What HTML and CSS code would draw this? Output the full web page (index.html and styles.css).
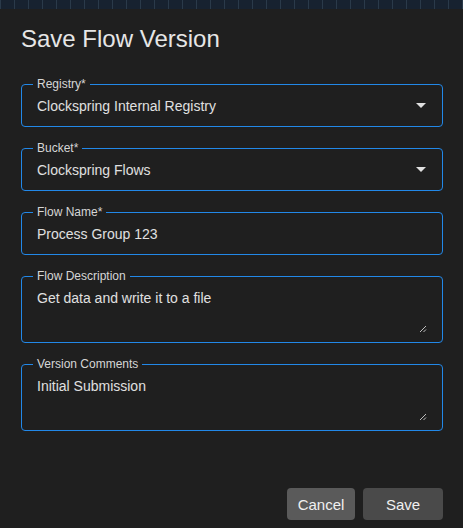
FILE: index.html
```html
<!DOCTYPE html>
<html lang="en">
<head>
<meta charset="utf-8">
<title>Save Flow Version</title>
<link rel="stylesheet" href="styles.css">
</head>
<body>
<div class="backdrop"></div>
<div class="dialog">
  <h1 class="title">Save Flow Version</h1>
  <form class="form">
    <fieldset class="field">
      <legend class="label">Registry*</legend>
      <div class="select">
        <span class="value">Clockspring Internal Registry</span>
        <svg class="caret" width="10" height="5" viewBox="0 0 10 5"><path d="M0 0h10L5 5z" fill="#e0e0e0"/></svg>
      </div>
    </fieldset>
    <fieldset class="field">
      <legend class="label">Bucket*</legend>
      <div class="select">
        <span class="value">Clockspring Flows</span>
        <svg class="caret" width="10" height="5" viewBox="0 0 10 5"><path d="M0 0h10L5 5z" fill="#e0e0e0"/></svg>
      </div>
    </fieldset>
    <fieldset class="field">
      <legend class="label">Flow Name*</legend>
      <div class="select">
        <span class="value">Process Group 123</span>
      </div>
    </fieldset>
    <fieldset class="field area">
      <legend class="label">Flow Description</legend>
      <div class="area-body">
        <span class="value">Get data and write it to a file</span>
        <svg class="grip" width="8" height="8" viewBox="0 0 8 8"><path d="M7 1L1 7M7 4.5L4.5 7" stroke="#bdbdbd" stroke-width="1"/></svg>
      </div>
    </fieldset>
    <fieldset class="field area">
      <legend class="label">Version Comments</legend>
      <div class="area-body">
        <span class="value">Initial Submission</span>
        <svg class="grip" width="8" height="8" viewBox="0 0 8 8"><path d="M7 1L1 7M7 4.5L4.5 7" stroke="#bdbdbd" stroke-width="1"/></svg>
      </div>
    </fieldset>
  </form>
  <div class="actions">
    <button class="btn cancel" type="button">Cancel</button>
    <button class="btn save" type="button">Save</button>
  </div>
</div>
</body>
</html>
```
FILE: styles.css
```css
* { box-sizing: border-box; }
html, body {
  margin: 0;
  padding: 0;
  background: #1f1f1f;
  font-family: "Liberation Sans", Arial, sans-serif;
  color: #e0e0e0;
}
.backdrop {
  height: 9px;
  background-color: #172230;
  background-image: linear-gradient(to right, #2a3a4a 1px, transparent 1px);
  background-size: 14px 9px;
  background-position: 0 0;
}
.dialog {
  padding: 0 20px 0 21px;
  height: 511px;
  display: flex;
  flex-direction: column;
}
.title {
  margin: 16px 0 0 0;
  font-size: 24px;
  line-height: 28px;
  font-weight: 400;
  color: #e6e6e6;
}
.form {
  margin-top: 24px;
  display: flex;
  flex-direction: column;
  gap: 14px;
}
.field {
  margin: 0;
  border: 1px solid #2288e8;
  border-radius: 4px;
  padding: 0 15px 0 15px;
  min-width: 0;
}
.label {
  font-size: 12px;
  line-height: 14px;
  padding: 0 4px;
  margin-left: -4px;
  color: #d6d6d6;
}
.select {
  height: 35px;
  padding-bottom: 6px;
  display: flex;
  align-items: center;
  justify-content: space-between;
}
.value {
  font-size: 14px;
  line-height: 18px;
  color: #e0e0e0;
}
.caret {
  margin-right: 1px;
  display: block;
}
.area-body {
  height: 59px;
  padding-top: 6px;
  padding-bottom: 9px;
  display: flex;
  justify-content: space-between;
}
.grip {
  align-self: flex-end;
  margin-right: 0;
  display: block;
}
.actions {
  margin-top: auto;
  display: flex;
  justify-content: flex-end;
  gap: 8px;
}
.btn {
  height: 32px;
  border: none;
  border-radius: 4px;
  font-family: "Liberation Sans", Arial, sans-serif;
  font-size: 15px;
  color: #f0f0f0;
  padding: 0;
}
.cancel {
  width: 68px;
  background: #5a5a5a;
}
.save {
  width: 80px;
  background: #4a4a4a;
}
```
